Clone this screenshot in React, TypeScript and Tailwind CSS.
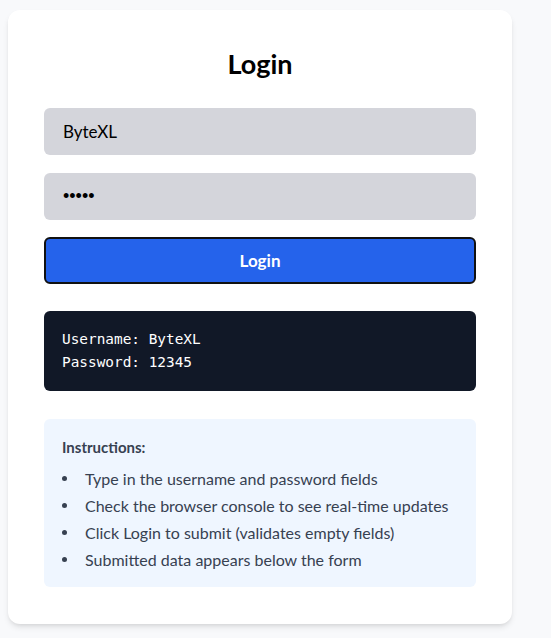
import { useState } from 'react';

const tips = [
  'Type in the username and password fields',
  'Check the browser console to see real-time updates',
  'Click Login to submit (validates empty fields)',
  'Submitted data appears below the form',
];

export default function App() {
  const [username, setUsername] = useState('ByteXL');
  const [password, setPassword] = useState('12345');

  return (
    <div
      className="min-h-screen bg-[#f8f9fb] pt-[10px] pl-2"
      style={{ fontFamily: 'Lato, "Noto Sans", sans-serif' }}
    >
      <div className="w-[504px] rounded-xl bg-white px-9 pt-[38px] pb-[37px] shadow-md">
        <h1 className="mb-[28px] text-center text-[27px] font-bold leading-8 text-black">Login</h1>

        <div className="flex flex-col gap-[18px]">
          <input
            value={username}
            onChange={(e) => setUsername(e.target.value)}
            className="h-[47px] w-full rounded-md bg-[#d4d5db] px-[19px] text-[17px] text-black outline-none"
          />
          <input
            type="password"
            value={password}
            onChange={(e) => setPassword(e.target.value)}
            className="h-[47px] w-full rounded-md bg-[#d4d5db] px-[19px] text-[18px] text-black outline-none"
            style={{ fontFamily: '"Liberation Sans", sans-serif' }}
          />
        </div>

        <button className="mt-[17px] h-[47px] w-full rounded-md border-2 border-[#111111] bg-[#2563eb] text-[17px] font-bold text-white">
          Login
        </button>

        <div
          className="mt-[27px] rounded-md bg-[#111827] px-[18px] py-[17px] text-[14.4px] leading-[23px] text-white"
          style={{ fontFamily: '"DejaVu Sans Mono", "Liberation Mono", monospace' }}
        >
          <div>Username: {username}</div>
          <div>Password: {password}</div>
        </div>

        <div className="mt-[28px] rounded-md bg-[#eff6ff] px-[18px] pt-[18px] pb-[14px] text-[#374151]">
          <p className="mb-[8px] text-[15px] font-bold leading-5">Instructions:</p>
          <ul className="text-[16px] leading-[27px]">
            {tips.map((t) => (
              <li key={t} className="flex items-center">
                <span className="mr-[18px] h-[5px] w-[5px] shrink-0 rounded-full bg-[#374151]" />
                {t}
              </li>
            ))}
          </ul>
        </div>
      </div>
    </div>
  );
}
